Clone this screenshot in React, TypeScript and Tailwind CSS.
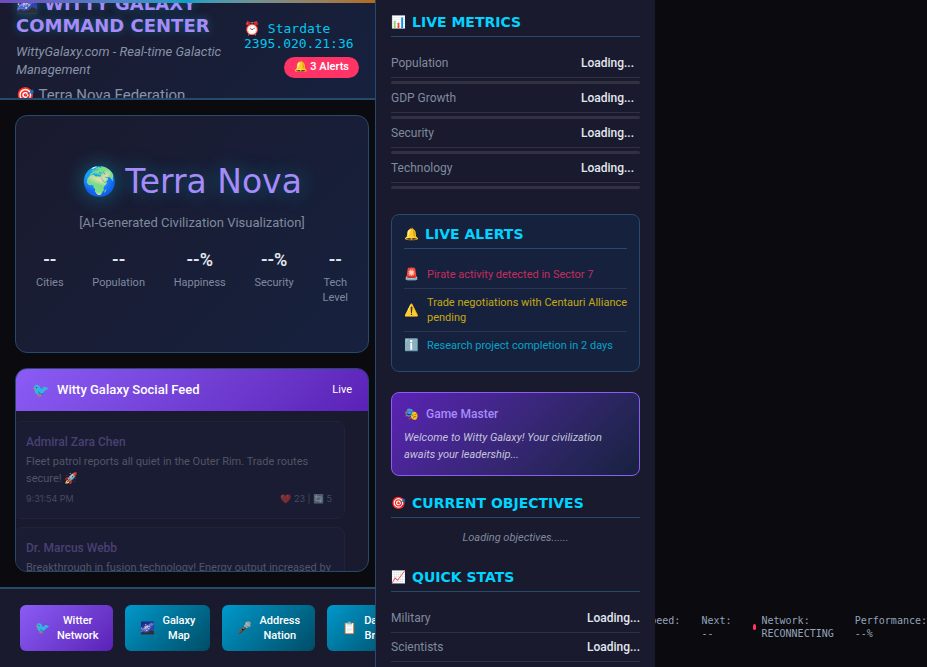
import type { ReactNode } from "react";

const BODY = "font-['Roboto',sans-serif]";
const DISPLAY = "font-['DejaVu_Sans',sans-serif]";
const MONO = "font-['DejaVu_Sans_Mono',monospace]";

const civStats = [
  { value: "--", label: "Cities" },
  { value: "--", label: "Population" },
  { value: "--%", label: "Happiness" },
  { value: "--%", label: "Security" },
  { value: "--", label: "Tech Level" },
];

const posts = [
  {
    author: "Admiral Zara Chen",
    text: "Fleet patrol reports all quiet in the Outer Rim. Trade routes secure! 🚀",
    time: "9:31:54 PM",
    reactions: "❤️ 23 | 🔄 5",
  },
  {
    author: "Dr. Marcus Webb",
    text: "Breakthrough in fusion technology! Energy output increased by 15%.",
    time: "9:31:54 PM",
    reactions: "❤️ 45 | 🔄 12",
  },
];

const actions = [
  { icon: "🐦", top: "Witter", bottom: "Network", color: "from-[#8b5cf6] to-[#5b21b6]" },
  { icon: "🌌", top: "Galaxy", bottom: "Map", color: "from-[#0099cc] to-[#004d66]" },
  { icon: "🎤", top: "Address", bottom: "Nation", color: "from-[#0099cc] to-[#004d66]" },
  { icon: "📋", top: "Daily", bottom: "Brief", color: "from-[#0099cc] to-[#004d66]" },
];

const alerts = [
  { icon: "🚨", text: "Pirate activity detected in Sector 7", color: "text-[#c42d5c]" },
  { icon: "⚠️", text: "Trade negotiations with Centauri Alliance pending", color: "text-[#c4a912]" },
  { icon: "ℹ️", text: "Research project completion in 2 days", color: "text-[#06a3c8]" },
];

function SectionTitle({ icon, children }: { icon: string; children: ReactNode }) {
  return (
    <h2
      className={`mb-3 flex h-[22px] gap-[6px] border-b border-[#264a6b] text-[14px] leading-[15px] font-bold whitespace-nowrap text-[#00d4ff] ${DISPLAY}`}
    >
      <span className="text-[12px]">{icon}</span>
      {children}
    </h2>
  );
}

function StatRow({ label, inset = false }: { label: string; inset?: boolean }) {
  return (
    <div
      className={`flex h-[29px] items-center justify-between border-b border-[#313142] text-[12px] ${inset ? "pr-[6px]" : ""}`}
    >
      <span className="text-[#7f8a9e]">{label}</span>
      <span className="font-medium text-[#e2e8f0]">Loading...</span>
    </div>
  );
}

function Header() {
  return (
    <header className="relative flex h-[100px] shrink-0 items-center justify-between overflow-hidden border-b-2 border-[#264a6b] bg-linear-135 from-[#1a1a2e] to-[#16213e] px-4">
      <div className="absolute inset-x-0 top-0 h-[3px] bg-linear-to-r from-[#6d4bbd] via-[#0a9fc4] to-[#b36b14]" />
      <div className="min-w-0 flex-1">
        <h1
          className={`text-[18px] leading-[22px] font-bold text-[#a78bfa] [text-shadow:0_0_10px_rgba(0,212,255,0.35)] ${DISPLAY}`}
        >
          🌌 WITTY GALAXY COMMAND CENTER
        </h1>
        <p className="mt-[6px] text-[13px] leading-[18px] text-[#8793a8] italic">
          WittyGalaxy.com - Real-time Galactic Management
        </p>
        <p className="mt-[5px] text-[15px] leading-[22px] text-[#8793a8]">🎯 Terra Nova Federation</p>
      </div>
      <div className="flex w-[115px] shrink-0 flex-col items-end gap-[6px]">
        <time className={`w-full text-[13px] leading-[15px] text-[#00c8f0] ${MONO}`}>⏰ Stardate 2395.020.21:36</time>
        <button type="button" className="h-[21px] rounded-full bg-[#ff3366] px-[10px] text-[11px] font-semibold whitespace-nowrap text-white">
          🔔 3 Alerts
        </button>
      </div>
    </header>
  );
}

function Civilization() {
  return (
    <section className="flex min-h-0 flex-col items-center justify-center rounded-xl border border-[#264a6b] bg-linear-135 from-[#1a1a2e] to-[#16213e] px-5">
      <h2
        className={`flex items-center gap-2 text-[33px] leading-[38px] whitespace-nowrap text-[#a78bfa] [text-shadow:0_0_20px_rgba(0,212,255,0.4)] ${DISPLAY}`}
      >
        <span className="text-[28px]">🌍</span>
        Terra Nova
      </h2>
      <p className="mt-[14px] text-[13px] leading-4 text-[#7f8a9e]">[AI-Generated Civilization Visualization]</p>
      <dl className="mt-[18px] flex w-full justify-between text-center">
        {civStats.map((s) => (
          <div key={s.label} className="flex flex-col-reverse justify-end gap-1 last:w-min">
            <dt className="text-[11px] leading-[15px] text-[#7f8a9e]">{s.label}</dt>
            <dd className="text-[18px] leading-[22px] font-semibold text-[#e2e8f0]">{s.value}</dd>
          </div>
        ))}
      </dl>
    </section>
  );
}

function SocialFeed() {
  return (
    <section className="flex min-h-0 flex-col overflow-hidden rounded-xl border border-[#264a6b] bg-[#1a1a2e]">
      <div className="flex h-[42px] shrink-0 items-center bg-linear-135 from-[#8b5cf6] to-[#5b21b6] px-4 text-white">
        <span className="mr-2 text-[14px]">🐦</span>
        <h2 className="flex-1 text-[13px] font-medium">Witty Galaxy Social Feed</h2>
        <span className="text-[11px]">Live</span>
      </div>
      <div className="-ml-[3px] flex flex-col gap-2 pt-[10px] pr-[23px]">
        {posts.map((p) => (
          <article key={p.author} className="rounded-lg border border-[#22233a] bg-[#191c32] p-3">
            <h3 className="text-[12px] leading-4 font-medium text-[#4a4074]">{p.author}</h3>
            <p className="mt-[3px] text-[11px] leading-[17px] text-[#525567]">{p.text}</p>
            <div className="mt-[5px] flex justify-between font-['Inter',sans-serif] text-[9px] leading-[14px] text-[#7d8498]">
              <time className="opacity-45">{p.time}</time>
              <span className="opacity-45">{p.reactions}</span>
            </div>
          </article>
        ))}
      </div>
    </section>
  );
}

function ActionBar() {
  return (
    <nav className="flex h-20 shrink-0 items-center gap-3 overflow-hidden border-t-2 border-[#264a6b] bg-[#1a1a2e] px-5">
      {actions.map((a) => (
        <button
          key={a.top}
          type="button"
          className={`flex h-[46px] shrink-0 items-center gap-[7px] rounded-md bg-linear-135 px-[15px] text-[11px] leading-[15px] font-medium text-white ${a.color}`}
        >
          <span className="text-[12px]">{a.icon}</span>
          <span>
            {a.top}
            <br />
            {a.bottom}
          </span>
        </button>
      ))}
    </nav>
  );
}

function Sidebar() {
  return (
    <aside className="overflow-hidden border-l border-[#264a6b] bg-[#1a1a2e] p-[15px]">
      <section>
        <SectionTitle icon="📊">LIVE METRICS</SectionTitle>
        {["Population", "GDP Growth", "Security", "Technology"].map((m) => (
          <div key={m}>
            <StatRow label={m} inset />
            <div className="mt-[3px] h-[3px] rounded-xs bg-[#313142]" />
          </div>
        ))}
      </section>
      <section className="mt-[25px] rounded-lg border border-[#264a6b] bg-[#16213e] p-3">
        <SectionTitle icon="🔔">LIVE ALERTS</SectionTitle>
        <ul>
          {alerts.map((a) => (
            <li
              key={a.text}
              className={`flex items-center gap-2 border-b border-[#2c3650] py-[6px] text-[11px] leading-[15px] last:border-b-0 ${a.color}`}
            >
              <span className="w-[15px] shrink-0 text-[12px]">{a.icon}</span>
              <span className="-mr-2 flex-1">{a.text}</span>
            </li>
          ))}
        </ul>
      </section>
      <section className="mt-5 rounded-lg border border-[#8b5cf6] bg-linear-135 from-[#5b21b6] to-[#16213e] p-3">
        <h2 className="flex items-center gap-[7px] text-[12px] leading-[18px] font-medium text-[#a78bfa]">
          <span className="font-normal">🎭</span>
          Game Master
        </h2>
        <p className="mt-[6px] text-[11px] leading-[17px] text-[#c5c5da] italic">
          Welcome to Witty Galaxy! Your civilization awaits your leadership...
        </p>
      </section>
      <section className="mt-5">
        <SectionTitle icon="🎯">CURRENT OBJECTIVES</SectionTitle>
        <p className="text-center text-[11px] leading-[15px] text-[#7f8a9e] italic">Loading objectives......</p>
      </section>
      <section className="mt-[25px]">
        <SectionTitle icon="📈">QUICK STATS</SectionTitle>
        {["Military", "Scientists"].map((m) => (
          <StatRow key={m} label={m} />
        ))}
      </section>
    </aside>
  );
}

function StatusItem({ label, value }: { label: string; value: string }) {
  return (
    <span>
      {label}
      <br />
      {value}
    </span>
  );
}

function StatusBar() {
  return (
    <footer
      className={`flex h-20 items-center justify-end gap-[21px] self-end overflow-hidden text-[10px] leading-[13px] whitespace-nowrap text-[#94a3b8] ${MONO}`}
    >
      <StatusItem label="Speed:" value="--" />
      <StatusItem label="Next:" value="--" />
      <span className="flex items-center gap-[6px]">
        <span className="h-[6px] w-[3px] rounded-full bg-[#ff3366]" />
        <StatusItem label="Network:" value="RECONNECTING" />
      </span>
      <StatusItem label="Performance:" value="--%" />
    </footer>
  );
}

export default function App() {
  return (
    <div className={`grid h-screen grid-cols-[minmax(0,1fr)_280px_272px] grid-rows-[100%] overflow-hidden bg-[#0a0a0f] ${BODY}`}>
      <div className="flex min-w-0 flex-col">
        <Header />
        <main className="grid min-h-0 flex-1 grid-rows-[7fr_6fr] gap-[15px] py-[15px] pr-[6px] pl-[15px]">
          <Civilization />
          <SocialFeed />
        </main>
        <ActionBar />
      </div>
      <Sidebar />
      <StatusBar />
    </div>
  );
}
